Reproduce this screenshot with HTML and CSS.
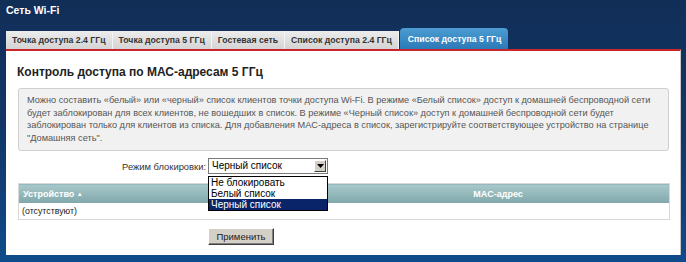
FILE: index.html
```html
<!DOCTYPE html>
<html lang="ru">
<head>
  <meta charset="UTF-8">
  <title>Сеть Wi-Fi</title>
  <link rel="stylesheet" href="styles.css">
</head>
<body>
  <div class="page-title">Сеть Wi-Fi</div>

  <!-- Tabs -->
  <div class="tabs">
    <div class="tab">Точка доступа 2.4 ГГц</div>
    <div class="tab">Точка доступа 5 ГГц</div>
    <div class="tab">Гостевая сеть</div>
    <div class="tab">Список доступа 2.4 ГГц</div>
    <div class="tab active">Список доступа 5 ГГц</div>
  </div>

  <div class="panel">
    <h1>Контроль доступа по МАС-адресам 5 ГГц</h1>

    <div class="info">
      Можно составить «белый» или «черный» список клиентов точки доступа Wi-Fi. В режиме «Белый список» доступ к домашней беспроводной сети будет заблокирован для всех клиентов, не вошедших в список. В режиме «Черный список» доступ к домашней беспроводной сети будет заблокирован только для клиентов из списка. Для добавления MAC-адреса в список, зарегистрируйте соответствующее устройство на странице "Домашняя сеть".
    </div>

    <div class="form-row">
      <label class="form-label">Режим блокировки:</label>
      <div class="select-wrap">
        <div class="select">
          <span class="select-value">Черный список</span>
          <span class="select-btn">
            <svg width="7" height="4" viewBox="0 0 7 4"><path d="M0 0h7L3.5 4z" fill="#000"/></svg>
          </span>
        </div>
        <!-- open dropdown -->
        <ul class="dropdown">
          <li>Не блокировать</li>
          <li>Белый список</li>
          <li class="selected">Черный список</li>
        </ul>
      </div>
    </div>

    <table class="grid">
      <thead>
        <tr>
          <th class="col-device">Устройство <span class="sort">▲</span></th>
          <th class="col-mac">MAC-адрес</th>
        </tr>
      </thead>
      <tbody>
        <tr>
          <td colspan="2">(отсутствуют)</td>
        </tr>
      </tbody>
    </table>

    <div class="actions">
      <button class="btn">Применить</button>
    </div>
  </div>
</body>
</html>
```

FILE: styles.css
```css
body {
  margin: 0;
  padding: 0;
  height: 262px;
  overflow: hidden;
  background: linear-gradient(180deg, #112e57 0%, #11386a 55%, #0f4b8b 100%);
  font-family: 'Liberation Sans', Arial, sans-serif;
  font-size: 8.8px;
  color: #333;
}

.page-title {
  color: #fff;
  font-weight: bold;
  font-size: 10.5px;
  padding: 4px 6px 0;
  height: 23px;
  box-sizing: border-box;
}

.tabs {
  display: flex;
  align-items: flex-end;
  padding-left: 6px;
  height: 26px;
}

.tab {
  height: 18px;
  line-height: 18px;
  padding: 0 6px;
  background: linear-gradient(180deg, #ececec, #d4d4d4);
  border-right: 1px solid #f4f4f4;
  color: #333;
  font-size: 8.7px;
  font-weight: bold;
  white-space: nowrap;
}

.tab.active {
  height: 21px;
  line-height: 22px;
  margin-left: 1px;
  padding: 0 7px 0 8px;
  border: none;
  border-radius: 4px 4px 0 0;
  background: linear-gradient(180deg, #4d9dd3, #2b7ab8);
  color: #fff;
}

.panel {
  margin: 0 5px 0 6px;
  border-top: 2px solid #c9262c;
  border-right: 1px solid #c8c8c8;
  background: #fff;
  padding: 0 12px;
  height: 206px;
  box-sizing: border-box;
}

h1 {
  margin: 0 0 0 -1px;
  padding-top: 14px;
  height: 37px;
  box-sizing: border-box;
  font-size: 12px;
  line-height: 14px;
  font-weight: bold;
  color: #222;
}

.info {
  background: #f1f1f1;
  border: 1px solid #cfcfcf;
  border-radius: 3px;
  padding: 5px 8px 6px 8px;
  color: #555;
  font-size: 9.2px;
  line-height: 12.6px;
  height: 63px;
  box-sizing: border-box;
  margin-right: -1px;
}

.form-row {
  display: grid;
  grid-template-columns: 188px 120px;
  gap: 2px;
  align-items: center;
  margin-top: 7px;
  height: 16px;
}

.form-label {
  text-align: right;
  font-size: 9.4px;
  color: #333;
}

.select-wrap {
  position: relative;
}

.select {
  display: flex;
  height: 16px;
  box-sizing: border-box;
  border: 1px solid #7a7a7a;
  background: #fff;
  color: #000;
  font-size: 10px;
}

.select-value {
  flex: 1;
  line-height: 14px;
  padding-left: 3px;
}

.select-btn {
  width: 12px;
  margin: 1px;
  background: #d4d0c8;
  border: 1px solid;
  border-color: #fff #404040 #404040 #fff;
  box-sizing: border-box;
  display: flex;
  align-items: center;
  justify-content: center;
}

.dropdown {
  position: absolute;
  top: 18px;
  left: 0;
  width: 120px;
  box-sizing: border-box;
  margin: 0;
  padding: 0;
  list-style: none;
  background: #fff;
  border: 1px solid #000;
  z-index: 10;
  color: #000;
  font-size: 10px;
}

.dropdown li {
  height: 11px;
  line-height: 11px;
  padding: 0 2px;
}

.dropdown li.selected {
  background: #0a246a;
  color: #fff;
}

.grid {
  width: 652px;
  border-collapse: collapse;
  margin-top: 9px;
  border: 1px solid #d8d8d8;
}

.grid th {
  height: 19px;
  padding: 0 4px;
  background: linear-gradient(180deg, #a8c9cb, #80a7aa);
  color: #fff;
  font-weight: bold;
  font-size: 9px;
}

.col-device {
  text-align: left;
  width: 300px;
}

.col-mac {
  text-align: center;
}

.sort {
  font-size: 6px;
  vertical-align: 1px;
}

.grid td {
  height: 16px;
  padding: 0 3px;
  color: #222;
}

.actions {
  padding-left: 190px;
  margin-top: 8px;
}

.btn {
  font-family: 'Liberation Sans', Arial, sans-serif;
  font-size: 9.5px;
  color: #222;
  height: 17px;
  width: 66px;
  padding: 0;
  background: #d4d0c8;
  border: 1px solid;
  border-color: #fff #404040 #404040 #fff;
  box-shadow: inset -1px -1px 0 #808080;
}
```
